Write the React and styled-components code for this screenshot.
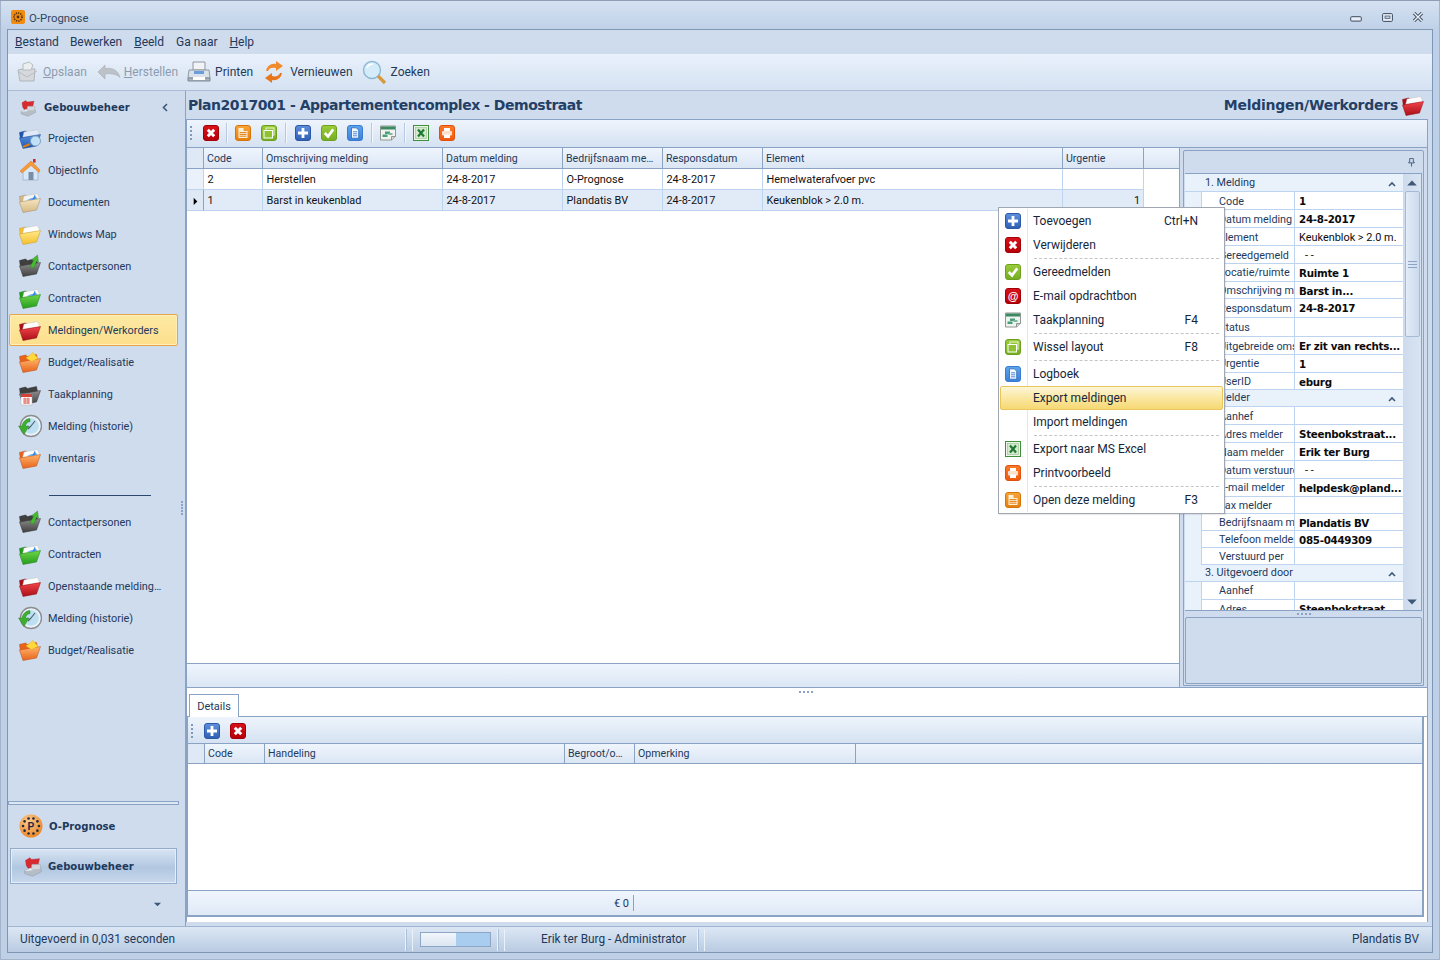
import React from 'react';
import styled, { createGlobalStyle } from 'styled-components';

const INK = '#1e395b';
const LINE = '#8aa3c4';
const PALE = '#cfdcee';
const SOFT = '#bcd4f0';
const FONT = 'Roboto, "Liberation Sans", sans-serif';
const HEAVY = '"DejaVu Sans", "Liberation Sans", sans-serif';

const Global = createGlobalStyle`
  html, body { margin: 0; padding: 0; background: #bfd0e6; }
  * { box-sizing: border-box; }
  #root { width: 1440px; height: 960px; }
`;

/* ---------- frame ---------- */
const Win = styled.div`
  position: relative; width: 1440px; height: 960px; overflow: hidden;
  display: flex; flex-direction: column; padding: 0 7px 7px;
  font: 12px/1 ${FONT}; color: ${INK};
  background: linear-gradient(#d4e1f1 0, #bed0e7 30px, #bfd0e6 100%);
  border: 1px solid #8e9db3; border-width: 1px 0 0;
  box-shadow: inset 1px 0 0 #a3b4ca, inset -1px 0 0 #a3b4ca, inset 0 -1px 0 #a3b4ca;
`;
const TitleBar = styled.div`
  height: 28px; flex: none; display: flex; align-items: center; gap: 4px; padding: 4px 0 0 4px;
  font-size: 11.4px; color: #33465f;
`;
const TitleText = styled.span`flex: 1; padding-top: 3px;`;
const Caption = styled.div`display: flex; align-items: center; gap: 19px; padding-right: 9px;`;
const MinSlot = styled.span`display: flex; margin: 4px 1px 0 0;`;
const Shell = styled.div`
  flex: 1; min-height: 0; display: flex; flex-direction: column;
  border: 1px solid #7d96b6; background: ${PALE};
`;
const MenuBar = styled.div`
  height: 24px; flex: none; display: flex; align-items: center; padding-left: 7px;
`;
const MenuItem = styled.span`
  margin-right: ${p => p.$gap}px; color: ${INK}; font-size: 12px;
`;
const U = styled.span`text-decoration: underline;`;
const ToolBar = styled.div`
  height: 37px; flex: none; display: flex; align-items: center; padding: 0 0 0 9px;
  background: linear-gradient(#e9f1fb, #d5e2f2); border-bottom: 1px solid #a9bdd8;
`;
const ToolBtn = styled.div`
  display: flex; align-items: center; gap: ${p => p.$gap}px; margin-right: ${p => p.$gap2}px;
  color: ${p => (p.$off ? '#8d9bae' : INK)}; font-size: 12px;
`;
const Body = styled.div`flex: 1; min-height: 0; display: flex;`;

/* ---------- sidebar ---------- */
const Sidebar = styled.aside`
  position: relative; width: 178px; flex: none; display: flex; flex-direction: column;
  border-right: 1px solid ${LINE}; padding-top: 1px;
`;
const NavHead = styled.div`
  height: 30px; display: flex; align-items: center; padding: 1px 15px 0 11px; gap: 7px;
  font: bold 10.1px/1 ${HEAVY}; color: ${INK};
`;
const NavHeadText = styled.span`flex: 1; padding-top: 1px;`;
const NavList = styled.div`display: flex; flex-direction: column;`;
const NavItem = styled.div`
  height: 32px; display: flex; align-items: center; gap: 6px; padding-left: 8px;
  margin: 0 7px 0 1px; font-size: 10.9px; white-space: nowrap; border: 1px solid transparent; border-radius: 2px;
  ${p => p.$active && `
    background: linear-gradient(#fde9a4, #fddf8d); border-color: #e5a54a;
    box-shadow: inset 0 0 0 1px #ffeeb8;
  `}
`;
const NavLabel = styled.span`padding-top: 2px;`;
const NavRule = styled.div`
  height: 32px; display: flex; align-items: flex-end; padding: 0 0 10px 41px;
  &::after { content: ''; width: 102px; height: 1px; background: #2c4772; }
`;
const Grip = styled.div`
  position: absolute; right: 2px; top: 410px; width: 2px; height: 14px;
  background: repeating-linear-gradient(#8ba4c5 0 2px, transparent 2px 3px);
`;
const NavBottom = styled.div`margin-top: auto; display: flex; flex-direction: column; padding-bottom: 2px;`;
const NavSplit = styled.div`height: 4px; margin: 0 6px 0 0; background: #dde8f5; border: 1px solid ${LINE};`;
const AppRow = styled.div`
  height: 36px; display: flex; align-items: center; padding-left: ${p => p.$pad}px; gap: ${p => p.$gap}px; margin: 3px 8px 0 2px;
  font: bold 10.1px/1 ${HEAVY}; color: ${INK}; border: 1px solid transparent;
  ${p => p.$active && `
    background: linear-gradient(#d8e4f3, #b1c7e1 55%, #c9d8ec); border-color: #93acca;
    box-shadow: inset 0 0 0 1px #e4edf8; margin-top: 4px;
  `}
`;
const AppLabel = styled.span`padding-top: 2px;`;
const Dropper = styled.div`
  height: 40px; display: flex; align-items: center; justify-content: flex-end; padding-right: 23px;
`;

/* ---------- main ---------- */
const Main = styled.main`flex: 1; min-width: 0; display: flex; flex-direction: column; padding: 0 4px 4px 0;`;
const Heading = styled.div`
  height: 28px; flex: none; display: flex; align-items: center; justify-content: space-between;
  padding: 0 3px 1px 2px; font: bold 14px/1 ${HEAVY}; color: #243f66; letter-spacing: -0.47px;
`;
const HeadEnd = styled.span`display: flex; align-items: center; gap: 3px; font-size: 14px; letter-spacing: -0.25px;`;
const Panel = styled.div`
  flex: 1; min-height: 0; display: flex; flex-direction: column; background: #fff;
  border: 1px solid ${LINE}; border-bottom: 0;
`;
const PanelBar = styled.div`
  flex: none; height: ${p => p.$h}px; display: flex; align-items: center;
  padding: ${p => p.$pt || 0}px 0 ${p => p.$pb || 0}px 3px;
  background: linear-gradient(#eef4fc, #d5e2f2); border-bottom: 1px solid ${LINE};
`;
const Dots = styled.span`
  width: 2px; height: 14px; margin-right: ${p => p.$mr}px;
  background: repeating-linear-gradient(#7f99bb 0 2px, transparent 2px 4px);
`;
const IconSlot = styled.span`
  display: flex; width: 16px; height: 16px; margin-right: ${p => p.$mr}px;
`;
const BarSep = styled.span`width: 2px; height: 20px; margin-right: ${p => p.$mr}px; background: linear-gradient(90deg, #b8c9df 50%, #f4f8fd 50%);`;

const Master = styled.div`flex: none; height: 540px; display: flex;`;
const GridWrap = styled.div`
  flex: 1; min-width: 0; display: flex; flex-direction: column; border-right: 1px solid ${LINE};
`;
const Row = styled.div`
  display: grid; grid-template-columns: ${p => p.$cols}; flex: none;
`;
const HeaderRow = styled(Row)`
  height: ${p => p.$h}px; background: linear-gradient(#eff5fd, #dbe6f4); border-bottom: 1px solid ${LINE};
`;
const HeadCell = styled.div`
  display: flex; align-items: center; padding: 2px 0 0 3px; color: ${INK}; font-size: 10.6px;
  border-right: 1px solid ${LINE}; white-space: nowrap; overflow: hidden;
  background: ${p => (p.$corner ? '#dfe9f6' : 'transparent')};
`;
const DataRow = styled(Row)`height: 21px;`;
const DataCell = styled.div`
  display: flex; align-items: center; padding: 2px 0 0 3.5px; color: #111; font-size: 10.9px; white-space: nowrap;
  justify-content: ${p => (p.$end ? 'flex-end' : 'flex-start')};
  padding-right: ${p => (p.$end ? '3px' : '0')};
  border-right: 1px solid ${SOFT}; border-bottom: 1px solid ${SOFT};
  background: ${p => (p.$sel ? '#e1ebf7' : '#fff')};
`;
const RowHead = styled.div`
  display: flex; align-items: center; justify-content: center;
  background: ${p => (p.$sel ? '#dfe9f6' : '#eaf1fa')};
  border-right: 1px solid ${p => (p.$sel ? LINE : SOFT)}; border-bottom: 1px solid ${SOFT};
`;
const GridFill = styled.div`flex: 1; background: #fff;`;
const GridFoot = styled.div`
  height: 25px; flex: none; background: linear-gradient(#eff5fd, #dbe6f4);
  border-top: 1px solid ${LINE}; border-bottom: 1px solid ${LINE};
`;

const Side = styled.div`
  width: 247px; flex: none; background: ${PALE}; padding: 2px 3px 1px 3px; display: flex; flex-direction: column;
  border-bottom: 1px solid ${LINE};
`;
const SideBox = styled.div`
  flex: 1; min-height: 0; display: flex; flex-direction: column; border: 1px solid ${LINE}; border-radius: 2px 2px 0 0;
  padding: 0 1px;
`;
const SideHead = styled.div`
  height: 22px; flex: none; display: flex; align-items: center; justify-content: flex-end; padding-right: 6px;
`;
const PropArea = styled.div`
  height: 438px; flex: none; display: flex; overflow: hidden; background: #e9f1fb; border: 1px solid ${LINE}; border-width: 1px 1px 1px 0;
`;
const PropList = styled.div`flex: 1; min-width: 0; display: flex; flex-direction: column;`;
const PropCat = styled.div`
  flex: none; height: ${p => p.$h}px; display: flex; align-items: center; justify-content: space-between;
  padding: 2px 7px 0 20px; font-size: 10.8px; background: #e9f1fb; border-bottom: 1px solid ${SOFT};
`;
const PropRow = styled.div`
  flex: none; height: ${p => p.$h}px; margin-left: 16px; display: grid; grid-template-columns: 93px 1fr;
  background: #fff; border-bottom: 1px solid ${SOFT}; border-left: 1px solid ${SOFT};
`;
const PropKey = styled.div`
  padding-left: 17px; font-size: 10.8px; line-height: ${p => p.$h + 1}px; white-space: nowrap; overflow: hidden;
  border-right: 1px solid ${SOFT}; color: ${INK};
`;
const PropVal = styled.div`
  padding-left: ${p => (p.$dash ? 10 : 4)}px; white-space: nowrap; overflow: hidden; color: #0b0b0b;
  font: ${p => (p.$plain ? `10.9px ${FONT}` : `bold 10.3px ${HEAVY}`)}; letter-spacing: ${p => (p.$plain ? 0 : '-0.28px')};
  line-height: ${p => p.$h + 1}px;
`;
const ScrollTrack = styled.div`
  width: 18px; flex: none; display: flex; flex-direction: column; align-items: center; background: linear-gradient(90deg, #cddbed, #d9e4f2);
`;
const ScrollBtn = styled.div`
  height: 17px; flex: none; width: 100%; display: flex; align-items: center; justify-content: center;
`;
const ScrollThumb = styled.div`
  height: 146px; flex: none; width: 15px; display: flex; align-items: center; justify-content: center;
  background: linear-gradient(90deg, #e3ecf8, #cbdaed); border: 1px solid #a4bad6; border-radius: 2px;
`;
const ScrollRest = styled.div`flex: 1;`;
const Thumbs = styled.div`
  width: 9px; height: 7px; background: repeating-linear-gradient(#8ba4c5 0 1px, transparent 1px 3px);
`;
const HSplit = styled.div`
  height: 6px; flex: none; display: flex; justify-content: center; align-items: center; background: ${PALE};
  &::after { content: ''; width: 14px; height: 2px; background: repeating-linear-gradient(90deg, #8ba4c5 0 2px, transparent 2px 4px); }
`;
const DescBox = styled.div`
  flex: none; height: 67px; background: #cfdcee; border: 1px solid ${LINE}; border-radius: 2px; margin-bottom: 1px;
`;

/* details */
const Details = styled.div`flex: none; height: 229px; display: flex; flex-direction: column; position: relative;`;
const TabStrip = styled.div`
  height: 29px; flex: none; display: flex; align-items: flex-end; padding-left: 2px; background: #fff;
  border-bottom: 1px solid ${LINE};
`;
const Tab = styled.div`
  position: relative; top: 1px; width: 50px; height: 23px; display: flex; align-items: center; justify-content: center;
  border: 1px solid ${LINE}; border-bottom: 0; background: #fff; font-size: 11px; color: ${INK};
`;
const SplitDots = styled.div`
  position: absolute; left: 612px; top: 3px; width: 14px; height: 2px;
  background: repeating-linear-gradient(90deg, #8ba4c5 0 2px, transparent 2px 4px);
`;
const DetailBox = styled.div`
  flex: 1; min-height: 0; display: flex; flex-direction: column; background: #fff;
  border-left: 1px solid ${LINE}; border-right: 2px solid ${LINE}; border-bottom: 2px solid ${LINE}; margin-right: 3px;
`;
const DetailFoot = styled.div`
  height: 25px; flex: none; display: grid; grid-template-columns: 446px 1fr; background: linear-gradient(#eff5fd, #dfe9f6);
  border-top: 1px solid ${LINE};
`;
const Sum = styled.div`
  display: flex; align-items: center; justify-content: flex-end; padding-right: 5px; font-size: 11px; color: ${INK};
  position: relative;
  &::after { content: ''; position: absolute; right: 0; top: 4px; bottom: 4px; width: 1px; background: ${LINE}; }
`;

/* status */
const Status = styled.div`
  height: 26px; flex: none; display: flex; align-items: center; font-size: 11.85px; color: ${INK};
  background: linear-gradient(#dce7f4, #b9cbe2); border-top: 1px solid #9fb5d1; padding-left: 12px;
`;
const StatusText = styled.span`
  width: ${p => p.$w}px; flex: ${p => (p.$grow ? 1 : 'none')}; text-align: ${p => p.$align || 'left'}; white-space: nowrap;
  padding-right: ${p => (p.$grow ? '13px' : 0)};
`;
const StatusSep = styled.span`
  width: 8px; height: 22px; margin: 0 ${p => p.$m}px 0 0;
  border-left: 1px solid #eaf1f9; border-right: 1px solid #eaf1f9; box-shadow: inset 1px 0 #aabfd9;
`;
const Progress = styled.div`
  width: 71px; height: 15px; border: 1px solid #8da6c6; margin-right: 6px;
  background: linear-gradient(90deg, transparent 50%, #a9cdee 50%), linear-gradient(#f2f6fb, #dbe5f1);
`;

/* context menu */
const Ctx = styled.div`
  position: absolute; left: 998px; top: 206px; width: 227px; padding: 1px; background: #fff;
  border: 1px solid #a0a7b3; box-shadow: 1px 1px 1px rgba(0,0,0,.08);
  display: flex; flex-direction: column; color: #1b2a3b; z-index: 5;
  &::before { content: ''; position: absolute; left: 28px; top: 1px; bottom: 1px; width: 1px; background: #e6e6e6; }
`;
const CtxItem = styled.div`
  position: relative; height: 24px; display: flex; align-items: center; font-size: 12px; color: #16263a;
  padding: 0 24px 0 4px; border: 1px solid transparent; border-radius: 2px;
  ${p => p.$hot && `
    background: linear-gradient(#fdf6d8, #fbe9a6 45%, #f6d873);
    border-color: #e8c65c; z-index: 1;
  `}
`;
const CtxIcon = styled.span`display: flex; width: 16px; height: 16px; margin-right: 12px;`;
const CtxLabel = styled.span`flex: 1;`;
const CtxSep = styled.div`
  height: 3px; margin-left: 34px; margin-right: 4px; display: flex; align-items: center;
  &::after { content: ''; flex: 1; border-top: 1px dashed #c5c5c5; }
`;

/* ---------- drawings ---------- */
const Svg = ({ s = 16, w, h, vb = '0 0 16 16', children }) => (
  <svg width={w || s} height={h || s} viewBox={vb} style={{ display: 'block', flex: 'none' }}>{children}</svg>
);
const Tile = ({ c1, c2, edge, children }) => {
  const id = `t${c1.slice(1)}`;
  return (
    <Svg>
      <defs><linearGradient id={id} x1="0" y1="0" x2="0" y2="1"><stop offset="0" stopColor={c1} /><stop offset="1" stopColor={c2} /></linearGradient></defs>
      <rect x=".5" y=".5" width="15" height="15" rx="2.5" fill={`url(#${id})`} stroke={edge} />
      {children}
    </Svg>
  );
};
const IcDelete = () => <Tile c1="#d8121a" c2="#b60008" edge="#a20007"><path d="M4.8 4.8l6.4 6.4M11.2 4.8l-6.4 6.4" stroke="#fff" strokeWidth="3" /></Tile>;
const IcAdd = () => <Tile c1="#5f90dc" c2="#2e5fb4" edge="#2b57a4"><path d="M8 3v10M3 8h10" stroke="#fff" strokeWidth="2.8" /></Tile>;
const IcCheck = () => <Tile c1="#9ccd3c" c2="#74ad22" edge="#6ea01f"><path d="M3.8 8l3.2 3.4 5.2-7" fill="none" stroke="#fff" strokeWidth="2.6" /></Tile>;
const IcDoc = () => <Tile c1="#5ea5ee" c2="#3a80dc" edge="#3a7bd2"><path d="M4.5 2.8h4.8L11.7 5.2v8H4.5z" fill="#f4f9ff" stroke="#2a66b8" strokeWidth=".8" /><path d="M6 6.8h4.2M6 8.8h4.2M6 10.8h4.2" stroke="#3a80dc" strokeWidth=".9" /></Tile>;
const IcOpen = () => <Tile c1="#f7a63a" c2="#e57f10" edge="#d77408"><path d="M3.5 3h5v3h4v7h-9z" fill="#fdf0d9" /><path d="M4.5 7.6h7M4.5 9.4h7M4.5 11.2h7" stroke="#e57f10" strokeWidth="1" /></Tile>;
const IcLayout = () => <Tile c1="#9ccd3c" c2="#74ad22" edge="#6ea01f"><rect x="5" y="3" width="8" height="7" fill="none" stroke="#e9f5cf" /><rect x="3" y="5.5" width="8.5" height="7.5" fill="#8fc230" stroke="#fff" /></Tile>;
const IcMail = () => <Tile c1="#d8121a" c2="#b60008" edge="#a20007"><text x="8" y="11.6" textAnchor="middle" fontFamily="Liberation Sans, sans-serif" fontWeight="700" fontSize="11" fill="#fff">@</text></Tile>;
const IcPrintTile = () => <Tile c1="#fb7a2a" c2="#ee5a10" edge="#e0520c"><rect x="5" y="3" width="6" height="3" fill="#fff" /><rect x="3" y="6" width="10" height="4.5" rx="1" fill="#fde0cc" /><rect x="5" y="9.5" width="6" height="3.5" fill="#fff" /></Tile>;
const IcPlan = () => (
  <Svg>
    <path d="M.5 1h15v10.5L11.5 15H.5z" fill="#f1f3f1" stroke="#8f9691" />
    <rect x="1" y="1.5" width="14" height="3" fill="#3d8a62" />
    <rect x="5" y="6.5" width="5" height="2.5" fill="#48a07a" /><rect x="2.5" y="9.5" width="5" height="2.5" fill="#48a07a" /><rect x="8.5" y="8" width="4" height="2" fill="#7fb89c" />
    <path d="M11.5 15v-3.5h4" fill="#cdd2ce" stroke="#8f9691" />
  </Svg>
);
const IcExcel = () => (
  <Svg>
    <rect x=".5" y=".5" width="15" height="15" fill="#eef6ea" stroke="#3d8f3c" />
    <rect x="2.5" y="2.5" width="11" height="11" fill="#d4e8cf" stroke="#9ac795" strokeWidth=".7" />
    <path d="M5 4.5l6 7M11 4.5l-6 7" stroke="#1f7a2f" strokeWidth="2.2" />
  </Svg>
);

const folderTones = {
  red: ['#f4444a', '#a90f18', '#8c0c13'],
  green: ['#6fd648', '#249b1f', '#1d7f19'],
  yellow: ['#ffe98c', '#f4c02c', '#c99a1b'],
  cream: ['#f6e6c2', '#d6b983', '#a08a63'],
  orange: ['#ffb36a', '#e8641c', '#b94c12'],
  grey: ['#8e8e8e', '#3f3f3f', '#333'],
  blue: ['#5b93e0', '#1c55b0', '#17458f'],
};
const Folder = ({ tone, paper = '#fdfdfd', extra, w = 24 }) => {
  const [a, b, e] = folderTones[tone];
  const id = `f${tone}`;
  return (
    <Svg w={w} h={w} vb="0 0 24 24">
      <defs><linearGradient id={id} x1="0" y1="0" x2="0" y2="1"><stop offset="0" stopColor={a} /><stop offset="1" stopColor={b} /></linearGradient></defs>
      <path d="M1.5 6.5l6-1.5 2 1.5 9-2 1 5-17 4z" fill={b} stroke={e} strokeWidth=".5" />
      {paper && <path d="M4.5 12l1.5-6L19.5 3.5l2.5 5.5z" fill={paper} stroke="#b9b9b9" strokeWidth=".4" />}
      <path d="M1.5 12l21-3.5L18.5 20 5 22.5z" fill={`url(#${id})`} stroke={e} strokeWidth=".5" />
      {extra}
    </Svg>
  );
};
const BlueArrow = <path d="M9 9.5l6-1.5 2-3.5.7 3 2.3.5-5 1.8z" fill="#3a8be0" />;
const GreenArrow = <path d="M12 13l3.5-6.5-2-.6L19.5 1l1 7-2-.6L16 14z" fill="#46bb31" stroke="#257a1c" strokeWidth=".4" />;
const Star = <path d="M8 8l5.5 3.5 6.5-3L15 2.5z" fill="#ffd83a" stroke="#d8a91c" strokeWidth=".4" />;

const IcProjects = () => (
  <Folder tone="blue" paper="#dfe9f8" extra={<>
    <path d="M5 21l7-3" stroke="#dc7a16" strokeWidth="2.2" />
    <circle cx="17.5" cy="15" r="5" fill="#bfe0f5" stroke="#7ea4c4" />
  </>} />
);
const IcHouse = () => (
  <Svg w={24} h={24} vb="0 0 24 24">
    <path d="M5 12v10h15V12l-7-6z" fill="#d6e8fa" stroke="#8ea3bb" strokeWidth=".6" />
    <path d="M2 13L13 3l9 9-1 2.5L13 7.5 4 15z" fill="#f89a3a" stroke="#d9761c" strokeWidth=".5" />
    <rect x="10.5" y="14" width="5" height="8" fill="#7b8ea5" />
    <rect x="15" y="1" width="2.6" height="3.6" fill="#c92c2c" />
  </Svg>
);
const IcCal = () => (
  <Folder tone="grey" paper={null} extra={<>
    <rect x="3" y="12" width="11" height="11" fill="#fff" stroke="#aaa" strokeWidth=".5" />
    <rect x="3" y="12" width="11" height="3" fill="#d6413c" />
    <path d="M5 17h7M5 19h7M5 21h7M7 15.5v6.5M10 15.5v6.5" stroke="#e05c55" strokeWidth=".9" />
  </>} />
);
const IcClock = () => (
  <Svg w={24} h={24} vb="0 0 24 24">
    <circle cx="13" cy="12" r="10.5" fill="#e8f3fa" stroke="#8d8d8d" strokeWidth="1.4" />
    <circle cx="13" cy="12" r="7.8" fill="#bcdff2" />
    <path d="M13 12l4-5M13 12l-3 3" stroke="#4d5d6c" strokeWidth="1.1" />
    <path d="M.5 12h3.5c.5-4 4-7.5 8-7.5v3.2c-2.5 0-4.2 2-4.6 4.3h3.6L6 20.5z" fill="#3fae2f" stroke="#1f7a1a" strokeWidth=".4" />
  </Svg>
);
const IcBuilding = ({ s = 24 }) => (
  <Svg s={s} vb="0 0 24 24">
    <path d="M4 5l5-3 2 2 9-1-2 8-11 3-2-3z" fill="#d92b2f" stroke="#9d1519" strokeWidth=".4" />
    <path d="M2 17l10-4 10 2-10 5z" fill="#f3f5f7" stroke="#9aa4ad" strokeWidth=".5" />
    <rect x="11" y="9.5" width="10" height="6" rx="1" fill="#d4d8dd" stroke="#8b949d" strokeWidth=".5" />
    <path d="M3 17v3l9 3 10-5v-3" fill="#b5bdc6" stroke="#8b949d" strokeWidth=".5" />
  </Svg>
);
const IcLogoBall = () => (
  <Svg w={24} h={24} vb="0 0 26 26">
    <defs><radialGradient id="ball" cx=".4" cy=".3" r=".8"><stop offset="0" stopColor="#fcc98a" /><stop offset="1" stopColor="#ea7f1c" /></radialGradient></defs>
    <circle cx="13" cy="13" r="12.5" fill="url(#ball)" />
    {Array.from({ length: 10 }).map((_, i) => {
      const t = (i / 10) * Math.PI * 2;
      return <circle key={i} cx={13 + 8.6 * Math.cos(t)} cy={13 + 8.6 * Math.sin(t)} r="1.4" fill="#1f2a44" />;
    })}
    <text x="13" y="17" textAnchor="middle" fontFamily="Liberation Sans, sans-serif" fontWeight="700" fontSize="11" fill="#1f2a44">P</text>
  </Svg>
);
const IcTitleLogo = () => (
  <Svg s={14} vb="0 0 14 14">
    <rect width="14" height="14" rx="2" fill="#f28c10" />
    <circle cx="7" cy="7" r="4" fill="none" stroke="#54300b" strokeWidth="1.6" strokeDasharray="1.3 1" />
    <circle cx="7" cy="7" r="1.4" fill="#54300b" />
  </Svg>
);
const IcSave = () => (
  <Svg w={22} h={22} vb="0 0 22 22">
    <path d="M1 9l5-1 2 1 2-1 8 0-1 12H3z" fill="#d6d9dc" stroke="#aeb4ba" />
    <path d="M6 9V3l6-2 4 3-2 5z" fill="#eceef0" stroke="#b8bdc2" />
    <path d="M2 11l8 5 10-6" fill="none" stroke="#b8bdc2" />
  </Svg>
);
const IcUndo = () => (
  <Svg w={24} h={18} vb="0 0 24 18">
    <path d="M1 9L8 2v3.5c8-1 13 2 15 9-3-3-8-4.5-15-3.5v5z" fill="#bcc2c8" stroke="#a7adb4" strokeWidth=".6" />
  </Svg>
);
const IcPrinter = () => (
  <Svg w={24} h={24} vb="0 0 24 24">
    <path d="M6 2h12v8H6z" fill="#f1f3f6" stroke="#8f98a3" />
    <path d="M2 10h20l1 8H1z" fill="#dbe1e8" stroke="#8f98a3" />
    <rect x="7" y="11" width="10" height="3" fill="#6a9edb" />
    <path d="M1 18h22v3H1z" fill="#aab4bf" stroke="#7f8994" />
    <rect x="6" y="17" width="12" height="3" fill="#fff" />
  </Svg>
);
const IcRefresh = () => (
  <Svg w={20} h={24} vb="0 0 20 24">
    <path d="M2 11C3 6 7 3 12 4V1l7 5-7 5V8C8 7 5 8 4 11z" fill="#f08a2a" />
    <path d="M18 13c-1 5-5 8-10 7v3l-7-5 7-5v3c4 1 7 0 8-3z" fill="#e9771a" />
  </Svg>
);
const IcSearch = () => (
  <Svg w={25} h={25} vb="0 0 25 25">
    <circle cx="10" cy="10" r="8.5" fill="#d4ecfa" stroke="#8db7d6" strokeWidth="1.4" />
    <path d="M5 8c1-3 4-4 6-4" fill="none" stroke="#fff" strokeWidth="1.4" />
    <path d="M16 16l7 7" stroke="#d59a3c" strokeWidth="3.2" />
  </Svg>
);
const Arrow = ({ dir, s = 9 }) => {
  const paths = {
    up: 'M1 6l4-4 4 4z', down: 'M1 2l4 4 4-4z', right: 'M3 1l4 4-4 4z',
  };
  return <Svg s={s} vb="0 0 10 8"><path d={paths[dir]} fill={dir === 'right' ? '#000' : '#3e5878'} /></Svg>;
};
const Chevron = () => <Svg s={8} vb="0 0 8 8"><path d="M1 6l3-3 3 3" fill="none" stroke="#3e5878" strokeWidth="1.6" /></Svg>;
const ChevLeft = () => <Svg s={9} vb="0 0 9 9"><path d="M6 1L2.5 4.5 6 8" fill="none" stroke="#3e5878" strokeWidth="1.6" /></Svg>;
const Pin = () => <Svg s={9} vb="0 0 9 10"><path d="M2.5 .5h4v4h1v1h-6v-1h1zM4.5 5.5v4" fill="none" stroke="#3e5878" /></Svg>;
const Min = () => <Svg w={12} h={6} vb="0 0 12 6"><rect x=".7" y=".7" width="10.6" height="4.4" rx="1" fill="#e9eff7" stroke="#3e4c60" /></Svg>;
const Max = () => <Svg w={11} h={9} vb="0 0 11 9"><rect x=".6" y=".6" width="9.8" height="7.8" rx="1" fill="#e9eff7" stroke="#3e4c60" /><rect x="3" y="3" width="5" height="2.5" fill="#bdd0e6" stroke="#3e4c60" strokeWidth=".7" /></Svg>;
const Close = () => <Svg w={12} h={10} vb="0 0 12 10"><path d="M2 1l8 8M10 1L2 9" stroke="#3e4c60" strokeWidth="3.2" /><path d="M2 1l8 8M10 1L2 9" stroke="#eef3f9" strokeWidth="1.4" /></Svg>;

/* ---------- data ---------- */
const navTop = [
  ['Projecten', <IcProjects />],
  ['ObjectInfo', <IcHouse />],
  ['Documenten', <Folder tone="cream" paper="#f4f4f4" extra={BlueArrow} />],
  ['Windows Map', <Folder tone="yellow" />],
  ['Contactpersonen', <Folder tone="grey" paper={null} extra={GreenArrow} />],
  ['Contracten', <Folder tone="green" extra={BlueArrow} />],
  ['Meldingen/Werkorders', <Folder tone="red" />, true],
  ['Budget/Realisatie', <Folder tone="orange" paper={null} extra={Star} />],
  ['Taakplanning', <IcCal />],
  ['Melding (historie)', <IcClock />],
  ['Inventaris', <Folder tone="orange" extra={BlueArrow} />],
];
const navLow = [
  ['Contactpersonen', <Folder tone="grey" paper={null} extra={GreenArrow} />],
  ['Contracten', <Folder tone="green" extra={BlueArrow} />],
  ['Openstaande melding…', <Folder tone="red" />],
  ['Melding (historie)', <IcClock />],
  ['Budget/Realisatie', <Folder tone="orange" paper={null} extra={Star} />],
];
const masterCols = '17px 59px 180px 120px 100px 100px 300px 81px 1fr';
const masterHead = ['Code', 'Omschrijving melding', 'Datum melding', 'Bedrijfsnaam me…', 'Responsdatum', 'Element', 'Urgentie'];
const masterRows = [
  { cells: ['2', 'Herstellen', '24-8-2017', 'O-Prognose', '24-8-2017', 'Hemelwaterafvoer pvc', ''] },
  { sel: true, cells: ['1', 'Barst in keukenblad', '24-8-2017', 'Plandatis BV', '24-8-2017', 'Keukenblok > 2.0 m.', '1'] },
];
const detailCols = '17px 60px 300px 70px 221px 1fr';
const props = [
  { cat: '1. Melding', h: 18 },
  { k: 'Code', v: '1', h: 18 }, { k: 'Datum melding', v: '24-8-2017', h: 18 },
  { k: 'Element', v: 'Keukenblok > 2.0 m.', plain: true, h: 18 }, { k: 'Gereedgemeld', v: '-  -', plain: true, dash: true, h: 18 },
  { k: 'Locatie/ruimte', v: 'Ruimte 1', h: 17.5 }, { k: 'Omschrijving melding', v: 'Barst in...', h: 17.5 },
  { k: 'Responsdatum', v: '24-8-2017', h: 18.5 }, { k: 'Status', v: '', h: 19 },
  { k: 'Uitgebreide omschrijving', v: 'Er zit van rechts...', h: 18.5 }, { k: 'Urgentie', v: '1', h: 17.5 },
  { k: 'UserID', v: 'eburg', h: 17 },
  { cat: '2. Melder', h: 17.5 },
  { k: 'Aanhef', v: '', h: 18 }, { k: 'Adres melder', v: 'Steenbokstraat...', h: 18 }, { k: 'Naam melder', v: 'Erik ter Burg', h: 18 },
  { k: 'Datum verstuurd', v: '-  -', plain: true, dash: true, h: 18 }, { k: 'E-mail melder', v: 'helpdesk@pland...', h: 17.5 },
  { k: 'Fax melder', v: '', h: 17 }, { k: 'Bedrijfsnaam melder', v: 'Plandatis BV', h: 17 },
  { k: 'Telefoon melder', v: '085-0449309', h: 17 }, { k: 'Verstuurd per', v: '', h: 17 },
  { cat: '3. Uitgevoerd door', h: 17.5 },
  { k: 'Aanhef', v: '', h: 17.5 }, { k: 'Adres', v: 'Steenbokstraat...', h: 18 },
];
const ctx = [
  { l: 'Toevoegen', i: <IcAdd />, s: 'Ctrl+N' },
  { l: 'Verwijderen', i: <IcDelete /> },
  { sep: true },
  { l: 'Gereedmelden', i: <IcCheck /> },
  { l: 'E-mail opdrachtbon', i: <IcMail /> },
  { l: 'Taakplanning', i: <IcPlan />, s: 'F4' },
  { sep: true },
  { l: 'Wissel layout', i: <IcLayout />, s: 'F8' },
  { sep: true },
  { l: 'Logboek', i: <IcDoc /> },
  { l: 'Export meldingen', hot: true },
  { l: 'Import meldingen' },
  { sep: true },
  { l: 'Export naar MS Excel', i: <IcExcel /> },
  { l: 'Printvoorbeeld', i: <IcPrintTile /> },
  { sep: true },
  { l: 'Open deze melding', i: <IcOpen />, s: 'F3' },
];

export default function App() {
  return (
    <>
      <Global />
      <Win>
        <TitleBar>
          <IcTitleLogo />
          <TitleText>O-Prognose</TitleText>
          <Caption><MinSlot><Min /></MinSlot><Max /><Close /></Caption>
        </TitleBar>
        <Shell>
          <MenuBar>
            <MenuItem $gap={11}><U>B</U>estand</MenuItem>
            <MenuItem $gap={12}>Bewerken</MenuItem>
            <MenuItem $gap={12}><U>B</U>eeld</MenuItem>
            <MenuItem $gap={12}>Ga naar</MenuItem>
            <MenuItem $gap={0}><U>H</U>elp</MenuItem>
          </MenuBar>
          <ToolBar>
            <ToolBtn $off $gap={4} $gap2={10}><IcSave /><span><U>O</U>pslaan</span></ToolBtn>
            <ToolBtn $off $gap={3} $gap2={9}><IcUndo /><span><U>H</U>erstellen</span></ToolBtn>
            <ToolBtn $gap={4} $gap2={11}><IcPrinter /><span>Printen</span></ToolBtn>
            <ToolBtn $gap={6} $gap2={9}><IcRefresh /><span>Vernieuwen</span></ToolBtn>
            <ToolBtn $gap={4} $gap2={0}><IcSearch /><span>Zoeken</span></ToolBtn>
          </ToolBar>
          <Body>
            <Sidebar>
              <NavHead><IcBuilding s={18} /><NavHeadText>Gebouwbeheer</NavHeadText><ChevLeft /></NavHead>
              <NavList>
                {navTop.map(([t, ic, on]) => <NavItem key={t} $active={on}>{ic}<NavLabel>{t}</NavLabel></NavItem>)}
                <NavRule />
                {navLow.map(([t, ic]) => <NavItem key={t}>{ic}<NavLabel>{t}</NavLabel></NavItem>)}
              </NavList>
              <Grip />
              <NavBottom>
                <NavSplit />
                <AppRow $pad={8} $gap={6}><IcLogoBall /><AppLabel>O-Prognose</AppLabel></AppRow>
                <AppRow $active $pad={11} $gap={5}><IcBuilding s={21} /><AppLabel>Gebouwbeheer</AppLabel></AppRow>
                <Dropper><Arrow dir="down" /></Dropper>
              </NavBottom>
            </Sidebar>
            <Main>
              <Heading>
                <span>Plan2017001 - Appartementencomplex - Demostraat</span>
                <HeadEnd>Meldingen/Werkorders <Folder tone="red" w={24} /></HeadEnd>
              </Heading>
              <Panel>
                <PanelBar $h={28} $pb={1}>
                  <Dots $mr={11} />
                  <IconSlot $mr={7}><IcDelete /></IconSlot><BarSep $mr={7} />
                  <IconSlot $mr={10}><IcOpen /></IconSlot>
                  <IconSlot $mr={8}><IcLayout /></IconSlot><BarSep $mr={8} />
                  <IconSlot $mr={10}><IcAdd /></IconSlot>
                  <IconSlot $mr={10}><IcCheck /></IconSlot>
                  <IconSlot $mr={8}><IcDoc /></IconSlot><BarSep $mr={7} />
                  <IconSlot $mr={8}><IcPlan /></IconSlot><BarSep $mr={7} />
                  <IconSlot $mr={10}><IcExcel /></IconSlot>
                  <IconSlot $mr={0}><IcPrintTile /></IconSlot>
                </PanelBar>
                <Master>
                  <GridWrap>
                    <HeaderRow $cols={masterCols} $h={21}>
                      <HeadCell $corner />
                      {masterHead.map(h => <HeadCell key={h}>{h}</HeadCell>)}
                      <span />
                    </HeaderRow>
                    {masterRows.map(r => (
                      <DataRow key={r.cells[0]} $cols={masterCols}>
                        <RowHead $sel={r.sel}>{r.sel && <Arrow dir="right" />}</RowHead>
                        {r.cells.map((c, i) => <DataCell key={i} $sel={r.sel} $end={i === 6}>{c}</DataCell>)}
                      </DataRow>
                    ))}
                    <GridFill />
                    <GridFoot />
                  </GridWrap>
                  <Side>
                    <SideBox>
                      <SideHead><Pin /></SideHead>
                      <PropArea>
                        <PropList>
                          {props.map((p, i) => p.cat
                            ? <PropCat key={i} $h={p.h}><span>{p.cat}</span><Chevron /></PropCat>
                            : (
                              <PropRow key={i} $h={p.h}>
                                <PropKey $h={p.h}>{p.k}</PropKey>
                                <PropVal $h={p.h} $plain={p.plain} $dash={p.dash}>{p.v}</PropVal>
                              </PropRow>
                            ))}
                        </PropList>
                        <ScrollTrack>
                          <ScrollBtn><Arrow dir="up" s={12} /></ScrollBtn>
                          <ScrollThumb><Thumbs /></ScrollThumb>
                          <ScrollRest />
                          <ScrollBtn><Arrow dir="down" s={12} /></ScrollBtn>
                        </ScrollTrack>
                      </PropArea>
                      <HSplit />
                      <DescBox />
                    </SideBox>
                  </Side>
                </Master>
                <Details>
                  <SplitDots />
                  <TabStrip><Tab>Details</Tab></TabStrip>
                  <DetailBox>
                    <PanelBar $h={27} $pt={1}>
                      <Dots $mr={11} />
                      <IconSlot $mr={10}><IcAdd /></IconSlot>
                      <IconSlot $mr={0}><IcDelete /></IconSlot>
                    </PanelBar>
                    <HeaderRow $cols={detailCols} $h={20}>
                      <HeadCell $corner />
                      <HeadCell>Code</HeadCell>
                      <HeadCell>Handeling</HeadCell>
                      <HeadCell>Begroot/o…</HeadCell>
                      <HeadCell>Opmerking</HeadCell>
                      <span />
                    </HeaderRow>
                    <GridFill />
                    <DetailFoot><Sum>€ 0</Sum><span /></DetailFoot>
                  </DetailBox>
                </Details>
              </Panel>
            </Main>
          </Body>
          <Status>
            <StatusText $w={385}>Uitgevoerd in 0,031 seconden</StatusText>
            <StatusSep $m={7} />
            <Progress />
            <StatusSep $m={36} />
            <StatusText $w={156}>Erik ter Burg - Administrator</StatusText>
            <StatusSep $m={0} />
            <StatusText $grow $align="right">Plandatis BV</StatusText>
          </Status>
        </Shell>
        <Ctx>
          {ctx.map((c, i) => c.sep
            ? <CtxSep key={i} />
            : (
              <CtxItem key={i} $hot={c.hot}>
                <CtxIcon>{c.i}</CtxIcon>
                <CtxLabel>{c.l}</CtxLabel>
                {c.s && <span>{c.s}</span>}
              </CtxItem>
            ))}
        </Ctx>
      </Win>
    </>
  );
}
